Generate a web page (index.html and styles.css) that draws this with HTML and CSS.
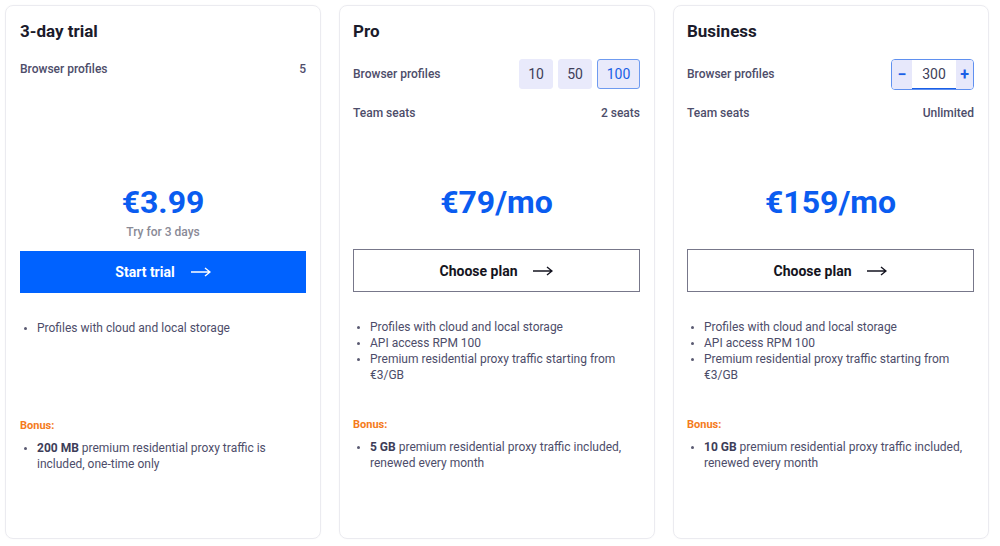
FILE: index.html
```html
<!DOCTYPE html>
<html lang="en">
<head>
<meta charset="utf-8">
<title>Plans</title>
<link rel="stylesheet" href="styles.css">
</head>
<body>
<div class="plans">
  <section class="card">
    <div class="head">
      <h2 class="title">3-day trial</h2>
      <div class="row row-plain">
        <span class="label">Browser profiles</span>
        <span class="value">5</span>
      </div>
    </div>
    <div class="price-block">
      <div class="price">€3.99</div>
      <div class="sub">Try for 3 days</div>
    </div>
    <a class="btn btn-primary">Start trial
      <svg class="arrow" width="20" height="10" viewBox="0 0 20 10"><path d="M0 5H19M14 1L19 5L14 9" fill="none" stroke="currentColor" stroke-width="1.4"/></svg>
    </a>
    <div class="features">
      <ul class="list">
        <li>Profiles with cloud and local storage</li>
      </ul>
    </div>
    <div class="bonus-label">Bonus:</div>
    <ul class="list bonus">
      <li><b>200 MB</b> premium residential proxy traffic is included, one-time only</li>
    </ul>
  </section>

  <section class="card">
    <div class="head">
      <h2 class="title">Pro</h2>
      <div class="row row-tall">
        <span class="label">Browser profiles</span>
        <div class="choices">
          <span class="choice">10</span>
          <span class="choice">50</span>
          <span class="choice choice-on">100</span>
        </div>
      </div>
      <div class="row row-plain seats">
        <span class="label">Team seats</span>
        <span class="value">2 seats</span>
      </div>
    </div>
    <div class="price-block">
      <div class="price">€79/mo</div>
    </div>
    <a class="btn btn-outline">Choose plan
      <svg class="arrow" width="20" height="10" viewBox="0 0 20 10"><path d="M0 5H19M14 1L19 5L14 9" fill="none" stroke="currentColor" stroke-width="1.4"/></svg>
    </a>
    <div class="features">
      <ul class="list">
        <li>Profiles with cloud and local storage</li>
        <li>API access RPM 100</li>
        <li>Premium residential proxy traffic starting from €3/GB</li>
      </ul>
    </div>
    <div class="bonus-label">Bonus:</div>
    <ul class="list bonus">
      <li><b>5 GB</b> premium residential proxy traffic included, renewed every month</li>
    </ul>
  </section>

  <section class="card">
    <div class="head">
      <h2 class="title">Business</h2>
      <div class="row row-tall">
        <span class="label">Browser profiles</span>
        <div class="stepper">
          <span class="step">−</span>
          <span class="step-val">300</span>
          <span class="step step-plus">+</span>
        </div>
      </div>
      <div class="row row-plain seats">
        <span class="label">Team seats</span>
        <span class="value">Unlimited</span>
      </div>
    </div>
    <div class="price-block">
      <div class="price">€159/mo</div>
    </div>
    <a class="btn btn-outline">Choose plan
      <svg class="arrow" width="20" height="10" viewBox="0 0 20 10"><path d="M0 5H19M14 1L19 5L14 9" fill="none" stroke="currentColor" stroke-width="1.4"/></svg>
    </a>
    <div class="features">
      <ul class="list">
        <li>Profiles with cloud and local storage</li>
        <li>API access RPM 100</li>
        <li>Premium residential proxy traffic starting from €3/GB</li>
      </ul>
    </div>
    <div class="bonus-label">Bonus:</div>
    <ul class="list bonus">
      <li><b>10 GB</b> premium residential proxy traffic included, renewed every month</li>
    </ul>
  </section>
</div>
</body>
</html>
```
FILE: styles.css
```css
* { box-sizing: border-box; }
html, body { margin: 0; background: #fff; }
body {
  padding: 5px;
  font-family: Roboto, "Liberation Sans", Arial, sans-serif;
  color: #4a4a68;
}
.plans {
  display: flex;
  gap: 18px;
}
.card {
  width: 316px;
  height: 534px;
  border: 1px solid #ebebf0;
  border-radius: 8px;
  padding: 13px 14px 14px 13px;
  display: flex;
  flex-direction: column;
  box-shadow: 0 0 2px rgba(0,0,0,0.03);
}
.card:first-child { padding-left: 14px; }
.head { height: 163px; }
.title {
  margin: 0 0 16px;
  font-size: 17px;
  line-height: 24px;
  font-weight: 700;
  color: #1b1b2b;
}
.row {
  display: flex;
  align-items: center;
  justify-content: space-between;
  font-size: 12px;
  font-weight: 500;
}
.row-plain { height: 20px; }
.row-tall { height: 30px; }
.seats { margin-top: 14px; }
.label { color: #4d4d6a; }
.value { color: #4d4d6a; }
.choices { display: flex; gap: 5px; }
.choice {
  height: 30px;
  min-width: 34px;
  padding: 0 7px;
  display: flex;
  align-items: center;
  justify-content: center;
  background: #e9eafb;
  border: 1px solid #e9eafb;
  border-radius: 3px;
  font-size: 14px;
  font-weight: 400;
  color: #3d3d58;
}
.choice-on {
  border-color: #6f9bf0;
  color: #1a5fe6;
  min-width: 43px;
}
.stepper {
  display: flex;
  height: 31px;
  width: 83px;
  border: 1px solid #5f90f0;
  border-radius: 4px;
  overflow: hidden;
}
.step {
  width: 20px;
  background: #e7e8fb;
  display: flex;
  align-items: center;
  justify-content: center;
  color: #1a5fe6;
  font-size: 16px;
  font-weight: 700;
}
.step-plus { width: 17px; }
.step-val {
  flex: 1;
  display: flex;
  align-items: center;
  justify-content: center;
  font-size: 14px;
  font-weight: 400;
  color: #3d3d58;
  border-bottom: 1px solid #1a5fe6;
}
.price-block {
  min-height: 67px;
  text-align: center;
}
.price {
  font-size: 32px;
  line-height: 40px;
  font-weight: 700;
  color: #0a5cf0;
}
.sub {
  margin: 2px 0 11px;
  font-size: 12px;
  line-height: 16px;
  font-weight: 500;
  color: #8a8a96;
}
.btn {
  display: flex;
  align-items: center;
  justify-content: center;
  gap: 16px;
  font-size: 14px;
  font-weight: 700;
  text-decoration: none;
  cursor: pointer;
}
.btn-primary {
  height: 42px;
  background: #0062ff;
  color: #fff;
}
.btn-outline {
  height: 43px;
  border: 1px solid #77778a;
  color: #141420;
  background: #fff;
}
.arrow { display: block; }
.features {
  height: 126px;
  padding-top: 27px;
}
.list {
  margin: 0;
  padding-left: 17px;
  font-size: 12px;
  line-height: 16px;
  color: #4d4d6a;
}
.list li::marker { font-size: 10px; color: #5a5a72; }
.list b { font-weight: 700; color: #3d3d58; }
.bonus-label {
  font-size: 11px;
  line-height: 14px;
  font-weight: 700;
  color: #f47b20;
}
.bonus { margin-top: 7px; }
```
